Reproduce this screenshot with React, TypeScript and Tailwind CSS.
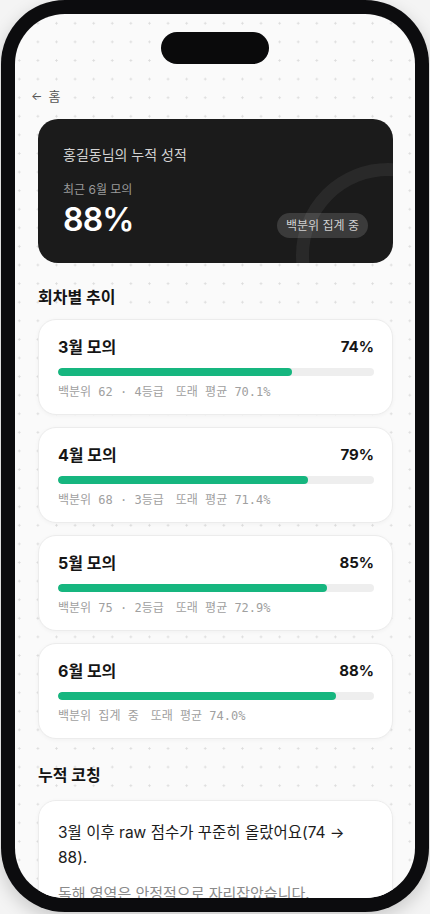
import React from "react";

const rounds = [
  { title: "3월 모의", pct: 74, left: "백분위 62 · 4등급", avg: "또래 평균 70.1%" },
  { title: "4월 모의", pct: 79, left: "백분위 68 · 3등급", avg: "또래 평균 71.4%" },
  { title: "5월 모의", pct: 85, left: "백분위 75 · 2등급", avg: "또래 평균 72.9%" },
  { title: "6월 모의", pct: 88, left: "백분위 집계 중", avg: "또래 평균 74.0%" },
];

const RoundCard = ({ title, pct, left, avg }: (typeof rounds)[number]) => {
  return (
    <div className="rounded-[18px] border border-[#ececec] bg-white pl-[19px] pr-[18px] pt-[15px] pb-[13px] shadow-[0_1px_4px_rgba(0,0,0,0.04)]">
      <div className="flex items-center justify-between">
        <span className="text-[16px] font-bold leading-6 text-[#151515]">{title}</span>
        <span className="text-[15px] font-bold leading-6 text-[#151515]">{pct}%</span>
      </div>
      <div className="mt-[9px] h-2 w-full overflow-hidden rounded-full bg-[#eeeeee]">
        <div className="h-full rounded-full bg-[#16b67f]" style={{ width: `${pct}%` }}></div>
      </div>
      <div className="mt-[7px] flex gap-3 font-['DejaVu_Sans_Mono','Noto_Sans_CJK_KR',monospace] text-[12px] leading-[18px] text-[#a0a0a0]">
        <span>{left}</span>
        <span>{avg}</span>
      </div>
    </div>
  );
};

const App = () => {
  return (
    <div className="min-h-[914px] w-[430px] bg-[#f4f4f4] font-['Inter','Noto_Sans_CJK_KR',sans-serif]">
      <div className="mx-auto h-[912px] w-[428px] rounded-[64px] bg-[#0c0c0e] p-[14px] shadow-[0_6px_18px_rgba(0,0,0,0.18)]">
        <div className="relative h-full w-full overflow-hidden rounded-[50px] bg-[#fafafa] bg-[radial-gradient(circle,#dcdcdc_0.9px,transparent_1.3px)] bg-[length:18.6px_18.6px] bg-[position:-5px_0px]">
          <div className="absolute left-1/2 top-[18px] h-8 w-[108px] -translate-x-1/2 rounded-full bg-[#0a0a0b]"></div>

          <div className="pl-[23px] pr-[22px] pt-[72px]">
            <div className="-ml-[7px] flex items-center gap-1.5 text-[13px] leading-5 text-[#555]">
              <span className="text-[12px]">←</span>
              <span>홈</span>
            </div>

            <div className="relative mt-[13px] h-[144px] overflow-hidden rounded-[20px] bg-[#1b1b1b] px-[25px] pt-[26px]">
              <div className="absolute left-[258px] top-[44px] h-[184px] w-[184px] rounded-full border-[13px] border-[#ffffff10]"></div>
              <div className="relative text-[14px] leading-5 text-[#d2d2d2]">홍길동님의 누적 성적</div>
              <div className="relative mt-[17px] text-[12px] leading-4 text-[#9a9a9a]">최근 6월 모의</div>
              <div className="relative mt-[2px] flex items-end justify-between">
                <span className="text-[32px] font-semibold leading-10 tracking-tight text-white">88%</span>
                <span className="mb-0.5 rounded-full bg-[#ffffff24] px-[9px] py-[4px] text-[12px] leading-[17px] text-[#d0d0d0]">
                  백분위 집계 중
                </span>
              </div>
            </div>

            <h2 className="mt-[22px] text-[16px] font-bold leading-6 text-[#141414]">회차별 추이</h2>
            <div className="mt-[10px] flex flex-col gap-3">
              {rounds.map((r) => (
                <RoundCard key={r.title} {...r} />
              ))}
            </div>

            <h2 className="mt-6 text-[16px] font-bold leading-6 text-[#141414]">누적 코칭</h2>
            <div className="mt-[13px] rounded-[18px] border border-[#ececec] bg-white pl-[19px] pr-5 pt-[19px] pb-6 shadow-[0_1px_4px_rgba(0,0,0,0.04)]">
              <p className="text-[15.5px] leading-[25px] text-[#1c1c1c]">3월 이후 raw 점수가 꾸준히 올랐어요(74 → 88).</p>
              <p className="mt-[11px] text-[15px] leading-[25px] text-[#8a8a8a]">독해 영역은 안정적으로 자리잡았습니다.</p>
            </div>
          </div>
        </div>
      </div>
    </div>
  );
};

export default App;
